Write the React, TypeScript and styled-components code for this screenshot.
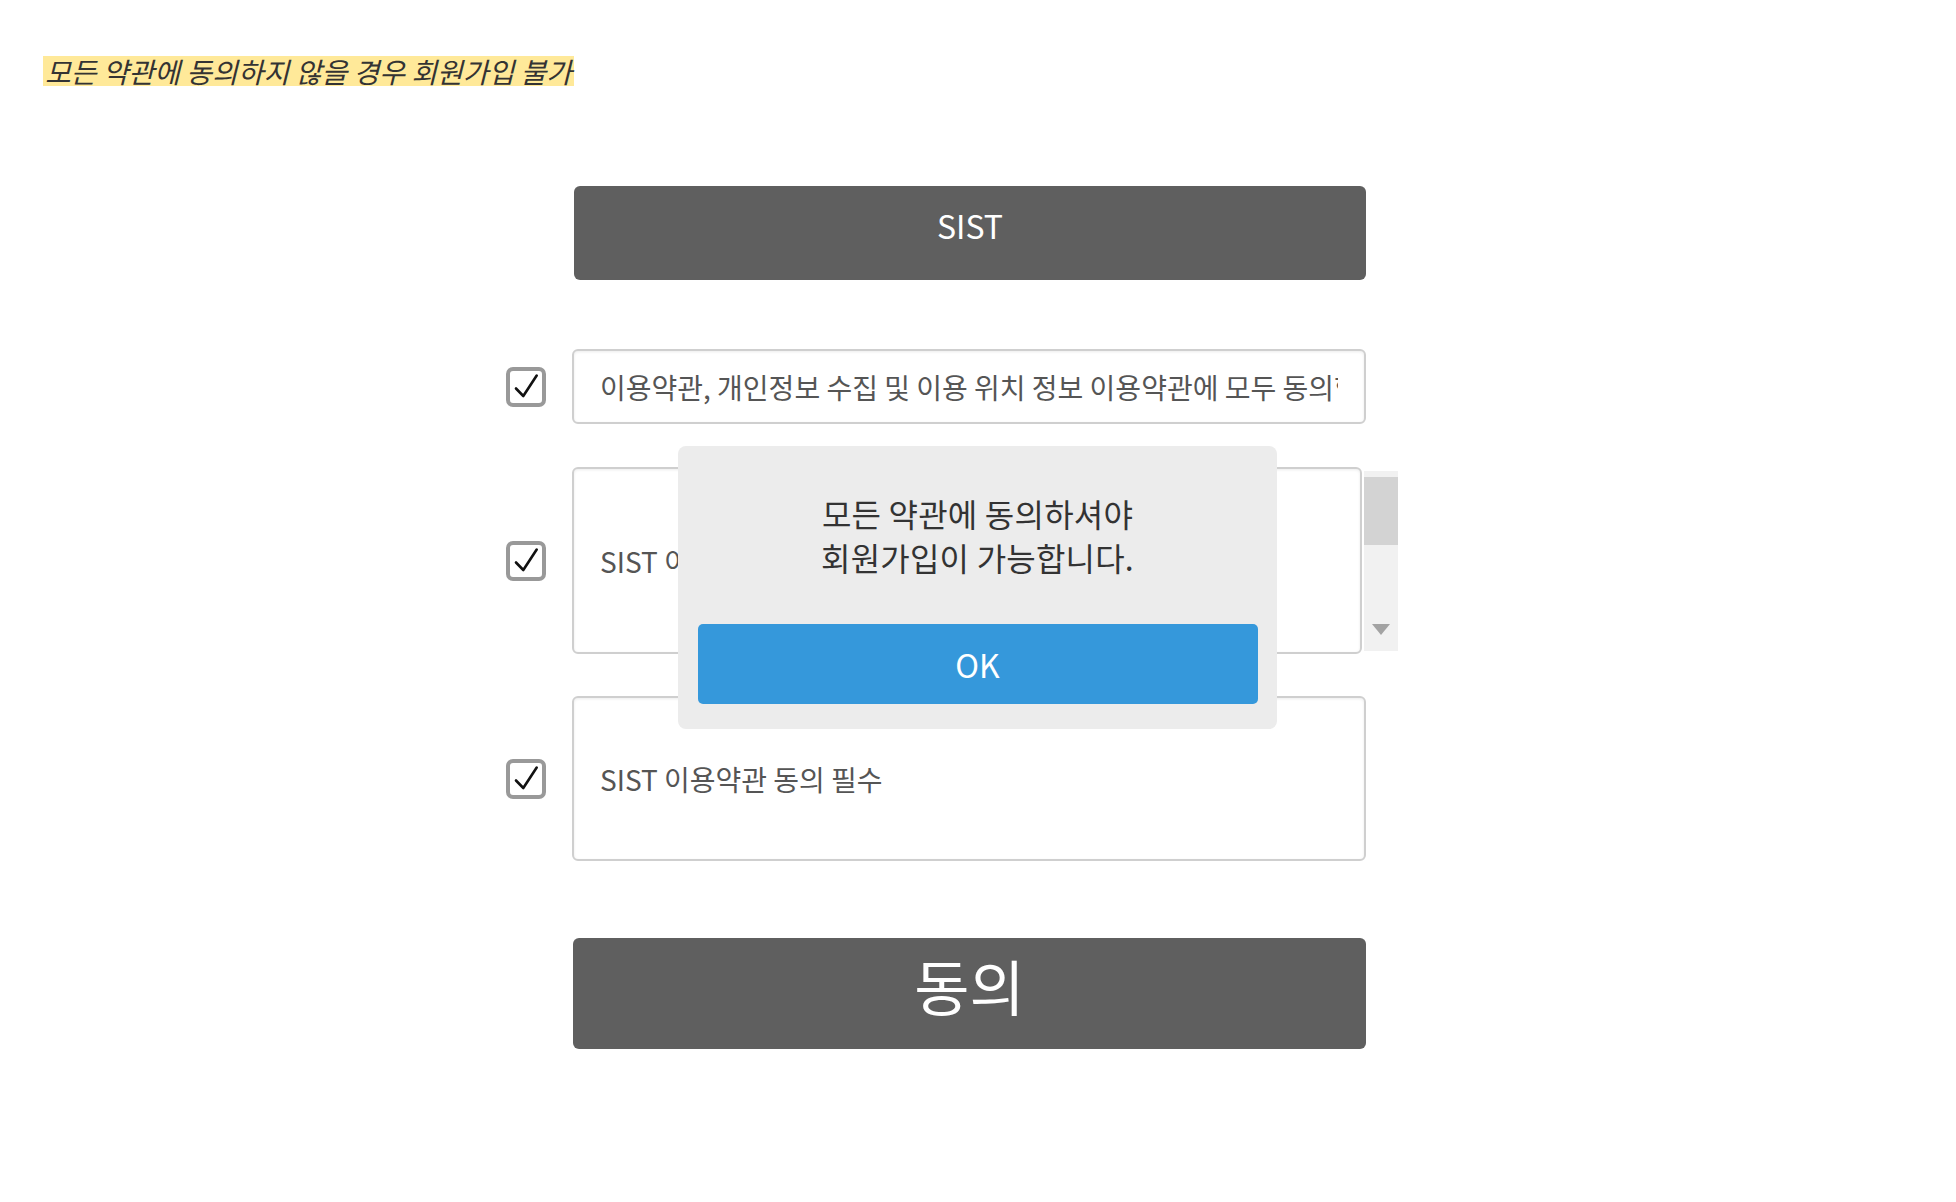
import React from "react";
import styled, { createGlobalStyle } from "styled-components";

const GlobalStyle = createGlobalStyle`
  html, body {
    margin: 0;
    padding: 0;
    background: #ffffff;
  }
  body {
    font-family: "Noto Sans CJK KR", "Noto Sans", sans-serif;
    color: #333333;
  }
  * { box-sizing: border-box; }
`;

const Page = styled.div`
  position: relative;
  width: 1956px;
  min-height: 1202px;
  padding-top: 56px;
`;

const Notice = styled.div`
  padding-left: 43px;
  height: 30px;
`;

const Highlight = styled.span`
  display: inline-block;
  font-size: 28px;
  line-height: 30px;
  height: 30px;
  font-style: italic;
  color: #333333;
  background: #ffe999;
  padding: 0 2px 0 2px;
  white-space: nowrap;
`;

const Form = styled.div`
  display: grid;
  grid-template-columns: 40px 794px;
  column-gap: 26px;
  padding-left: 506px;
  margin-top: 100px;
`;

const Banner = styled.div`
  grid-column: 2;
  height: 94px;
  margin-left: 2px;
  padding-bottom: 16px;
  background: #5f5f5f;
  border-radius: 6px;
  color: #ffffff;
  font-size: 32px;
  display: flex;
  align-items: center;
  justify-content: center;
`;

const CheckCell = styled.div<{ $top: number }>`
  grid-column: 1;
  margin-top: ${(p) => p.$top}px;
  display: flex;
  align-items: center;
`;

const CheckBox = styled.span`
  display: flex;
  align-items: center;
  justify-content: center;
  width: 40px;
  height: 40px;
  border: 4px solid #999999;
  border-radius: 7px;
  background: #ffffff;
`;

const BoxCell = styled.div<{ $top: number }>`
  grid-column: 2;
  margin-top: ${(p) => p.$top}px;
  display: flex;
  align-items: flex-start;
`;

const TermBox = styled.div<{ $h: number; $w?: number }>`
  flex: none;
  width: ${(p) => p.$w ?? 794}px;
  height: ${(p) => p.$h}px;
  border: 2px solid #cfcfcf;
  border-radius: 6px;
  box-shadow: inset 0 1px 3px rgba(0, 0, 0, 0.08);
  background: #ffffff;
  padding: 0 26px;
  display: flex;
  align-items: center;
  font-size: 28px;
  color: #555555;
`;

const TermText = styled.span`
  display: block;
  width: 100%;
  white-space: nowrap;
  overflow: hidden;
`;

const ScrollTrack = styled.div`
  flex: none;
  width: 34px;
  height: 180px;
  margin: 4px 0 0 2px;
  background: #f1f1f1;
  display: flex;
  flex-direction: column;
  justify-content: space-between;
  align-items: center;
  padding: 6px 0 16px;
`;

const ScrollThumb = styled.div`
  width: 34px;
  height: 68px;
  background: #d3d3d3;
`;

const ArrowDown = styled.div`
  width: 0;
  height: 0;
  border-left: 9px solid transparent;
  border-right: 9px solid transparent;
  border-top: 11px solid #a3a3a3;
`;

const AgreeButton = styled.div`
  grid-column: 2;
  margin-top: 77px;
  margin-left: 1px;
  height: 111px;
  padding-bottom: 18px;
  background: #5f5f5f;
  border-radius: 6px;
  color: #ffffff;
  font-size: 60px;
  display: flex;
  align-items: center;
  justify-content: center;
`;

const Dialog = styled.div`
  position: absolute;
  left: 678px;
  top: 446px;
  width: 599px;
  height: 283px;
  background: #ececec;
  border-radius: 8px;
  padding: 45px 20px 25px;
  display: flex;
  flex-direction: column;
  align-items: center;
`;

const DialogText = styled.p`
  margin: 0;
  font-size: 32px;
  line-height: 44px;
  letter-spacing: 0.2px;
  color: #333333;
  text-align: center;
`;

const OkButton = styled.div`
  margin-top: auto;
  width: 560px;
  height: 80px;
  background: #3598db;
  border-radius: 5px;
  color: #ffffff;
  font-size: 32px;
  display: flex;
  align-items: center;
  justify-content: center;
`;

const Check = () => (
  <svg width="32" height="32" viewBox="4 4 32 32">
    <path
      d="M10 21.5 L17.3 29 L30.7 8.5"
      fill="none"
      stroke="#111"
      strokeWidth="2.6"
      strokeLinecap="round"
      strokeLinejoin="round"
    />
  </svg>
);

export default function App() {
  return (
    <Page>
      <GlobalStyle />
      <Notice>
        <Highlight>모든 약관에 동의하지 않을 경우 회원가입 불가</Highlight>
      </Notice>
      <Form>
        <Banner>SIST</Banner>

        <CheckCell $top={69}>
          <CheckBox>
            <Check />
          </CheckBox>
        </CheckCell>
        <BoxCell $top={69}>
          <TermBox $h={75}>
            <TermText>
              이용약관, 개인정보 수집 및 이용 위치 정보 이용약관에 모두 동의합니다
            </TermText>
          </TermBox>
        </BoxCell>

        <CheckCell $top={43}>
          <CheckBox>
            <Check />
          </CheckBox>
        </CheckCell>
        <BoxCell $top={43}>
          <TermBox $h={187} $w={790}>
            <TermText>SIST 이용약관 동의 필수</TermText>
          </TermBox>
          <ScrollTrack>
            <ScrollThumb />
            <ArrowDown />
          </ScrollTrack>
        </BoxCell>

        <CheckCell $top={42}>
          <CheckBox>
            <Check />
          </CheckBox>
        </CheckCell>
        <BoxCell $top={42}>
          <TermBox $h={165}>
            <TermText>SIST 이용약관 동의 필수</TermText>
          </TermBox>
        </BoxCell>

        <AgreeButton>동의</AgreeButton>
      </Form>

      <Dialog>
        <DialogText>
          모든 약관에 동의하셔야
          <br />
          회원가입이 가능합니다.
        </DialogText>
        <OkButton>OK</OkButton>
      </Dialog>
    </Page>
  );
}
